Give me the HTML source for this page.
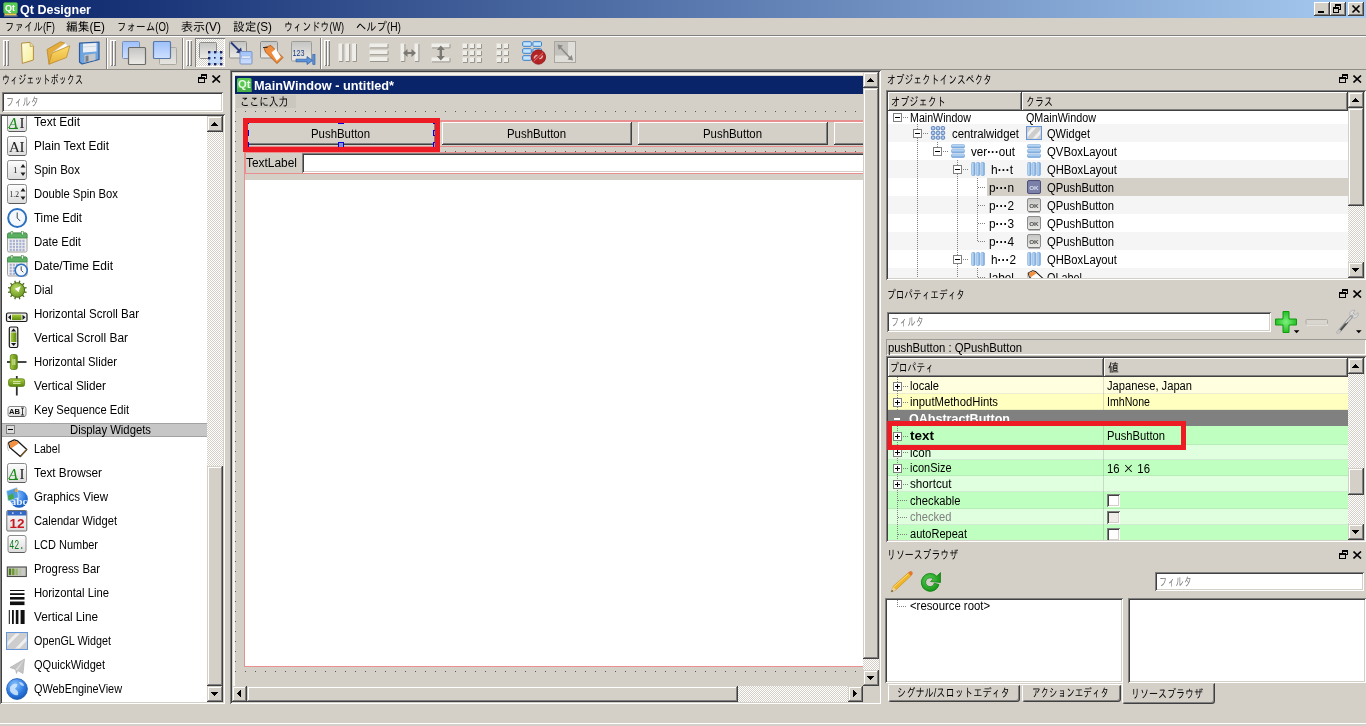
<!DOCTYPE html>
<html lang="ja"><head><meta charset="utf-8"><title>Qt Designer</title>
<style>

html,body{margin:0;padding:0;background:#d4d0c8;}
body{width:1366px;height:726px;overflow:hidden;font-family:"Liberation Sans","IPAGothic",sans-serif;font-size:12px;color:#000;}
#root{position:relative;width:1366px;height:726px;overflow:hidden;background:transparent;will-change:transform;}
#root div,#root span.t,#root svg{position:absolute;box-sizing:border-box;}
.t{white-space:nowrap;transform-origin:0 50%;display:block;}
.b{font-weight:bold;}
.w{color:#fff;}
.g{color:#808080;}
.face{background:#d4d0c8;}
.white{background:#fff;}
/* win classic 3d */
.btn{background:#d4d0c8;box-shadow:inset -1px -1px #404040,inset 1px 1px #fff,inset -2px -2px #808080,inset 2px 2px #d4d0c8;}
.sbtn{background:#d4d0c8;box-shadow:inset -1px -1px #404040,inset 1px 1px #d4d0c8,inset -2px -2px #808080,inset 2px 2px #fff;}
.sunk{box-shadow:inset 1px 1px #808080,inset -1px -1px #fff,inset 2px 2px #404040,inset -2px -2px #d4d0c8;}
.sunk1{box-shadow:inset 1px 1px #808080,inset -1px -1px #fff;}
.hdr{background:#d4d0c8;box-shadow:inset -1px -1px #404040,inset 1px 1px #fff,inset -2px -2px #808080;}
.track{background-color:#fff;background-image:conic-gradient(#d4d0c8 25%,#fff 0 50%,#d4d0c8 0 75%,#fff 0);background-size:2px 2px;}
.dots{background-image:radial-gradient(circle at .5px .5px,#000 .5px,transparent .6px);background-size:10px 10px;}
.clip{overflow:hidden;}

</style></head>
<body>
<div id="root">
<div class="" style="left:0px;top:0px;width:1366px;height:18px;background:linear-gradient(90deg,#0a246a 0%,#a6caf0 100%);"></div>
<svg style="left:3px;top:2px" width="16" height="15" viewBox="0 0 16 15" ><rect x="0.5" y="0.5" width="14" height="11" rx="1.5" fill="#5ccc58" stroke="#3c9c3c" stroke-width=".6"/><rect x="1.5" y="11.5" width="12" height="2" fill="#ecc84c"/><rect x="1" y="13.5" width="13.5" height="1" fill="#8c9c9c"/></svg>
<span id="t0" class="t b w" style="left:5px;top:1.5px;height:13px;line-height:13px;font-size:9px;transform:scaleX(1.0000);">Qt</span>
<span id="t1" class="t b w" style="left:20px;top:0.5px;height:17px;line-height:17px;font-size:13px;transform:scaleX(0.9635);">Qt Designer</span>
<div class="btn" style="left:1314px;top:2px;width:16px;height:14px;"></div>
<div class="btn" style="left:1330px;top:2px;width:16px;height:14px;"></div>
<div class="btn" style="left:1348px;top:2px;width:16px;height:14px;"></div>
<svg style="left:1314px;top:2px" width="16" height="14" viewBox="0 0 16 14" shape-rendering="crispEdges"><rect x="4" y="9" width="6" height="2" fill="#000"/></svg>
<svg style="left:1330px;top:2px" width="16" height="14" viewBox="0 0 16 14" shape-rendering="crispEdges"><path d="M5 2h6v6h-2v-1h1v-3h-4v1h-1z M3 5h6v6h-6z M4 7v3h4v-3z" fill="#000" fill-rule="evenodd"/></svg>
<svg style="left:1348px;top:2px" width="16" height="14" viewBox="0 0 16 14" ><path d="M4.5 3.5L11.5 10.5M11.5 3.5L4.5 10.5" stroke="#000" stroke-width="1.7"/></svg>
<span id="t2" class="t " style="left:5px;top:19px;height:16px;line-height:16px;font-size:12px;transform:scaleX(0.7895);">ファイル(F)</span>
<span id="t3" class="t " style="left:66px;top:19px;height:16px;line-height:16px;font-size:12px;transform:scaleX(0.9750);">編集(E)</span>
<span id="t4" class="t " style="left:117px;top:19px;height:16px;line-height:16px;font-size:12px;transform:scaleX(0.7960);">フォーム(O)</span>
<span id="t5" class="t " style="left:181px;top:19px;height:16px;line-height:16px;font-size:12px;transform:scaleX(1.0000);">表示(V)</span>
<span id="t6" class="t " style="left:233px;top:19px;height:16px;line-height:16px;font-size:12px;transform:scaleX(0.9750);">設定(S)</span>
<span id="t7" class="t " style="left:284px;top:19px;height:16px;line-height:16px;font-size:12px;transform:scaleX(0.7564);">ウィンドウ(W)</span>
<span id="t8" class="t " style="left:356px;top:19px;height:16px;line-height:16px;font-size:12px;transform:scaleX(0.8543);">ヘルプ(H)</span>
<div class="" style="left:0px;top:35px;width:1366px;height:1px;background:#808080"></div>
<div class="" style="left:0px;top:36px;width:1366px;height:1px;background:#fff"></div>
<div class="" style="left:0px;top:69px;width:1366px;height:1px;background:#8e8c86"></div>
<div class="" style="left:3px;top:40px;width:3px;height:26px;box-shadow:inset 1px 1px #fff,inset -1px -1px #808080;"></div><div class="" style="left:6px;top:40px;width:3px;height:26px;box-shadow:inset 1px 1px #fff,inset -1px -1px #808080;"></div>
<div class="" style="left:110px;top:40px;width:3px;height:26px;box-shadow:inset 1px 1px #fff,inset -1px -1px #808080;"></div><div class="" style="left:113px;top:40px;width:3px;height:26px;box-shadow:inset 1px 1px #fff,inset -1px -1px #808080;"></div>
<div class="" style="left:186px;top:40px;width:3px;height:26px;box-shadow:inset 1px 1px #fff,inset -1px -1px #808080;"></div><div class="" style="left:189px;top:40px;width:3px;height:26px;box-shadow:inset 1px 1px #fff,inset -1px -1px #808080;"></div>
<div class="" style="left:324px;top:40px;width:3px;height:26px;box-shadow:inset 1px 1px #fff,inset -1px -1px #808080;"></div><div class="" style="left:327px;top:40px;width:3px;height:26px;box-shadow:inset 1px 1px #fff,inset -1px -1px #808080;"></div>
<div class="" style="left:106px;top:38px;width:1px;height:31px;background:#808080"></div>
<div class="" style="left:107px;top:38px;width:1px;height:31px;background:#fff"></div>
<div class="" style="left:182px;top:38px;width:1px;height:31px;background:#808080"></div>
<div class="" style="left:183px;top:38px;width:1px;height:31px;background:#fff"></div>
<div class="" style="left:320px;top:38px;width:1px;height:31px;background:#808080"></div>
<div class="" style="left:321px;top:38px;width:1px;height:31px;background:#fff"></div>
<div class="track" style="left:195px;top:38px;width:30px;height:29px;box-shadow:inset 1px 1px #808080,inset -1px -1px #fff;"></div>
<svg width="0" height="0" style="left:0;top:0"><defs><linearGradient id="gBlue" x1="0" y1="0" x2="0" y2="1"><stop offset="0" stop-color="#9dc0fb"/><stop offset="1" stop-color="#cfe0fd"/></linearGradient><linearGradient id="gGray" x1="0" y1="0" x2="0" y2="1"><stop offset="0" stop-color="#c4c4c2"/><stop offset="1" stop-color="#ecebe8"/></linearGradient><linearGradient id="gGrayL" x1="0" y1="0" x2="0" y2="1"><stop offset="0" stop-color="#d2d0ca"/><stop offset="1" stop-color="#e6e4de"/></linearGradient><linearGradient id="gPaper" x1="0" y1="0" x2="1" y2="1"><stop offset="0" stop-color="#fffde0"/><stop offset="1" stop-color="#f6ee98"/></linearGradient><linearGradient id="gFold" x1="0" y1="0" x2="0" y2="1"><stop offset="0" stop-color="#ffdc6a"/><stop offset="1" stop-color="#e6b23c"/></linearGradient><linearGradient id="gBar" x1="0" y1="0" x2="0" y2="1"><stop offset="0" stop-color="#d8ecfc"/><stop offset="1" stop-color="#6fa4dc"/></linearGradient><linearGradient id="gBarH" x1="0" y1="0" x2="1" y2="0"><stop offset="0" stop-color="#d8ecfc"/><stop offset="1" stop-color="#6fa4dc"/></linearGradient><linearGradient id="gBox" x1="0" y1="0" x2="0" y2="1"><stop offset="0" stop-color="#fdfdfd"/><stop offset="1" stop-color="#dcdcdc"/></linearGradient><radialGradient id="gGlobe" cx=".4" cy=".3" r=".8"><stop offset="0" stop-color="#8cc4ff"/><stop offset=".6" stop-color="#2a78e0"/><stop offset="1" stop-color="#1450a8"/></radialGradient><radialGradient id="gDial" cx=".4" cy=".35" r=".7"><stop offset="0" stop-color="#b8d860"/><stop offset="1" stop-color="#6a9820"/></radialGradient><linearGradient id="gGreenV" x1="0" y1="0" x2="1" y2="0"><stop offset="0" stop-color="#a8cc3c"/><stop offset="1" stop-color="#5c8810"/></linearGradient><linearGradient id="gGreenH" x1="0" y1="0" x2="0" y2="1"><stop offset="0" stop-color="#a8cc3c"/><stop offset="1" stop-color="#5c8810"/></linearGradient><radialGradient id="gPlus" cx=".5" cy=".5" r=".6"><stop offset="0" stop-color="#7cf07c"/><stop offset="1" stop-color="#12b412"/></radialGradient><radialGradient id="gRef" cx=".4" cy=".4" r=".7"><stop offset="0" stop-color="#58d058"/><stop offset="1" stop-color="#0c8a0c"/></radialGradient></defs></svg>
<svg style="left:0;top:36px" width="600" height="34" viewBox="0 36 600 34"><path d="M21.5 43.2L30 42.3L33.4 46.2V60L22.3 63.4Z" fill="url(#gPaper)" stroke="#b48c3c" stroke-width="1"/><path d="M30 42.3L30.2 46.4L33.4 46.2" fill="#e8e0b0" stroke="#b48c3c" stroke-width=".7"/><path d="M47 49.5L60.5 41.8L65 43.2L64.5 57L49 64Z" fill="#e4ac3c" stroke="#b8882c" stroke-width=".8"/><path d="M51 53.5L65.5 43L67.5 45.5L54 60Z" fill="#fcfcfc" stroke="#c8c8c8" stroke-width=".5"/><path d="M48.8 64.3L52 53L69.8 45.8L66.5 57.5Z" fill="url(#gFold)" stroke="#bc8c2c" stroke-width=".8"/><path d="M79.5 43.2L99 42L99 59.5L82 64L79.5 62Z" fill="#6ea4e0" stroke="#2c5a9c" stroke-width="1.2" stroke-linejoin="round"/><path d="M83 43.8L96.5 43V51.5L83 52.5Z" fill="#ecf0f4"/><path d="M83 47L96.5 46.2" stroke="#c0c8d0" stroke-width=".6"/><path d="M84.5 55L95.5 53.5V60L84.5 62.6Z" fill="#c4c8cc"/><path d="M85.5 56L88.5 55.6V61.2L85.5 61.9Z" fill="#7c8084"/><rect x="122.5" y="41.5" width="17" height="17" rx="1" fill="url(#gBlue)" stroke="#7890b8" stroke-width="1"/><rect x="128.5" y="47.5" width="17" height="17" rx="1" fill="url(#gGray)" stroke="#6c6c68" stroke-width="1.2"/><rect x="159.5" y="47.5" width="17" height="17" rx="1" fill="url(#gGrayL)" stroke="#aaa89f" stroke-width="1"/><rect x="153.5" y="41.5" width="17" height="17" rx="1" fill="url(#gBlue)" stroke="#5878a8" stroke-width="1.2"/><rect x="199.5" y="42.5" width="17" height="16" rx="1" fill="url(#gGray)" stroke="#8c8c88" stroke-width="1"/><rect x="209" y="52" width="12" height="12" rx="1" fill="#c4dcfc" stroke="#9cb8e0" stroke-width="0.8"/><rect x="208" y="51" width="2.4" height="2.4" fill="#1c2464"/><rect x="208" y="57" width="2.4" height="2.4" fill="#1c2464"/><rect x="208" y="63" width="2.4" height="2.4" fill="#1c2464"/><rect x="214" y="51" width="2.4" height="2.4" fill="#1c2464"/><rect x="214" y="57" width="1.6" height="1.6" fill="#182060"/><rect x="214" y="63" width="2.4" height="2.4" fill="#1c2464"/><rect x="220" y="51" width="2.4" height="2.4" fill="#1c2464"/><rect x="220" y="57" width="2.4" height="2.4" fill="#1c2464"/><rect x="220" y="63" width="2.4" height="2.4" fill="#1c2464"/><rect x="229.5" y="41.5" width="17" height="16.5" rx="1" fill="url(#gGray)" stroke="#8c8c88" stroke-width="1"/><path d="M231 42.5L240 51.5" stroke="#28387c" stroke-width="1.8"/><path d="M242.5 54L236 52.5L241 47.5Z" fill="#28387c"/><rect x="240" y="51.5" width="12" height="12.5" rx="1" fill="url(#gBlue)" stroke="#7c94c0" stroke-width="1"/><rect x="241.5" y="56" width="9" height="2.2" fill="#e4eefc" stroke="#8ca4cc" stroke-width=".5"/><rect x="260.5" y="41.5" width="17" height="16.5" rx="1" fill="url(#gGray)" stroke="#8c8c88" stroke-width="1"/><path d="M264 47.5L271 45.5L283 57.5L277 63.5L265.5 52Z" fill="#f08c3c" stroke="#a85818" stroke-width=".9"/><path d="M271.5 52.5L275.8 48.8L280.8 57L276.8 60.8Z" fill="#fff"/><path d="M263 47.5h4.5" stroke="#303030" stroke-width="1"/><rect x="291.5" y="41.5" width="20" height="19.5" rx="1" fill="url(#gGray)" stroke="#9c9c98" stroke-width="1"/><text x="292.5" y="56" font-family="Liberation Sans,sans-serif" font-size="8.5" fill="#1c3c84" textLength="12" lengthAdjust="spacingAndGlyphs">123</text><path d="M296 59.2H307V56.5L312.5 60.5L307 64.5V61.8H296Z" fill="#5c94dc" stroke="#2c5ca4" stroke-width=".7"/><rect x="312.8" y="54.5" width="2.2" height="10" fill="#5c94dc" stroke="#2c5ca4" stroke-width=".6"/><rect x="338.5" y="43.5" width="4.4" height="18" fill="#f0eee8"/><path d="M342.9 44V61.5H339" fill="none" stroke="#98968e" stroke-width="1"/><rect x="345.3" y="43.5" width="4.4" height="18" fill="#f0eee8"/><path d="M349.7 44V61.5H345.8" fill="none" stroke="#98968e" stroke-width="1"/><rect x="352.1" y="43.5" width="4.4" height="18" fill="#f0eee8"/><path d="M356.5 44V61.5H352.6" fill="none" stroke="#98968e" stroke-width="1"/><rect x="369.5" y="43.5" width="18.5" height="4.4" fill="#f0eee8"/><path d="M388 44V47.9H370" fill="none" stroke="#98968e" stroke-width="1"/><rect x="369.5" y="50.3" width="18.5" height="4.4" fill="#f0eee8"/><path d="M388 50.8V54.7H370" fill="none" stroke="#98968e" stroke-width="1"/><rect x="369.5" y="57.1" width="18.5" height="4.4" fill="#f0eee8"/><path d="M388 57.6V61.5H370" fill="none" stroke="#98968e" stroke-width="1"/><rect x="400.5" y="43.5" width="4.4" height="18" fill="#f0eee8"/><path d="M404.9 44V61.5H401" fill="none" stroke="#98968e" stroke-width="1"/><rect x="414.5" y="43.5" width="4.4" height="18" fill="#f0eee8"/><path d="M418.9 44V61.5H415" fill="none" stroke="#98968e" stroke-width="1"/><path d="M403 53L407.5 49V52H411.5V49L416 53L411.5 57V54H407.5V57Z" fill="#7a7872"/><rect x="431.5" y="43.5" width="18.5" height="4.4" fill="#f0eee8"/><path d="M450 44V47.9H432" fill="none" stroke="#98968e" stroke-width="1"/><rect x="431.5" y="57.5" width="18.5" height="4.4" fill="#f0eee8"/><path d="M450 58V61.9H432" fill="none" stroke="#98968e" stroke-width="1"/><path d="M440.8 45.5L444.8 50H442V56H444.8L440.8 60.5L436.8 56H439.6V50H436.8Z" fill="#7a7872"/><rect x="462.5" y="43.5" width="5" height="5" fill="#f0eee8"/><path d="M467.5 44V48.5H463" fill="none" stroke="#98968e" stroke-width="1"/><rect x="462.5" y="50.5" width="5" height="5" fill="#f0eee8"/><path d="M467.5 51V55.5H463" fill="none" stroke="#98968e" stroke-width="1"/><rect x="462.5" y="57.5" width="5" height="5" fill="#f0eee8"/><path d="M467.5 58V62.5H463" fill="none" stroke="#98968e" stroke-width="1"/><rect x="469.5" y="43.5" width="5" height="5" fill="#f0eee8"/><path d="M474.5 44V48.5H470" fill="none" stroke="#98968e" stroke-width="1"/><rect x="469.5" y="50.5" width="5" height="5" fill="#f0eee8"/><path d="M474.5 51V55.5H470" fill="none" stroke="#98968e" stroke-width="1"/><rect x="469.5" y="57.5" width="5" height="5" fill="#f0eee8"/><path d="M474.5 58V62.5H470" fill="none" stroke="#98968e" stroke-width="1"/><rect x="476.5" y="43.5" width="5" height="5" fill="#f0eee8"/><path d="M481.5 44V48.5H477" fill="none" stroke="#98968e" stroke-width="1"/><rect x="476.5" y="50.5" width="5" height="5" fill="#f0eee8"/><path d="M481.5 51V55.5H477" fill="none" stroke="#98968e" stroke-width="1"/><rect x="476.5" y="57.5" width="5" height="5" fill="#f0eee8"/><path d="M481.5 58V62.5H477" fill="none" stroke="#98968e" stroke-width="1"/><rect x="496.5" y="43.5" width="5" height="5" fill="#f0eee8"/><path d="M501.5 44V48.5H497" fill="none" stroke="#98968e" stroke-width="1"/><rect x="496.5" y="50.5" width="5" height="5" fill="#f0eee8"/><path d="M501.5 51V55.5H497" fill="none" stroke="#98968e" stroke-width="1"/><rect x="496.5" y="57.5" width="5" height="5" fill="#f0eee8"/><path d="M501.5 58V62.5H497" fill="none" stroke="#98968e" stroke-width="1"/><rect x="503.5" y="43.5" width="5" height="5" fill="#f0eee8"/><path d="M508.5 44V48.5H504" fill="none" stroke="#98968e" stroke-width="1"/><rect x="503.5" y="50.5" width="5" height="5" fill="#f0eee8"/><path d="M508.5 51V55.5H504" fill="none" stroke="#98968e" stroke-width="1"/><rect x="503.5" y="57.5" width="5" height="5" fill="#f0eee8"/><path d="M508.5 58V62.5H504" fill="none" stroke="#98968e" stroke-width="1"/><rect x="522.7" y="41.7" width="8.6" height="4.6" rx="1" fill="#c4e4fc" stroke="#3880cc" stroke-width="1"/><rect x="522.7" y="48.7" width="8.6" height="4.6" rx="1" fill="#c4e4fc" stroke="#3880cc" stroke-width="1"/><rect x="522.7" y="55.7" width="8.6" height="4.6" rx="1" fill="#c4e4fc" stroke="#3880cc" stroke-width="1"/><rect x="532.9" y="41.7" width="8.6" height="4.6" rx="1" fill="#c4e4fc" stroke="#3880cc" stroke-width="1"/><rect x="532.9" y="48.7" width="8.6" height="4.6" rx="1" fill="#c4e4fc" stroke="#3880cc" stroke-width="1"/><rect x="532.9" y="55.7" width="8.6" height="4.6" rx="1" fill="#c4e4fc" stroke="#3880cc" stroke-width="1"/><circle cx="538.4" cy="57" r="7.2" fill="#b42424" stroke="#8c1414" stroke-width=".8"/><path d="M534.5 58.5a2.6 2.6 0 0 1 3 -3M542.3 55.5a2.6 2.6 0 0 1 -3 3" stroke="#e4b4b4" stroke-width="1.6" fill="none"/><path d="M533.8 61.2L543 52.8" stroke="#d87878" stroke-width="1"/><rect x="554.5" y="41.5" width="21" height="21" fill="#e0ded8" stroke="#a8a69e"/><rect x="555" y="42" width="13" height="13.5" fill="#c4c2bc"/><path d="M559 46L571 59" stroke="#8c8a84" stroke-width="1.5"/><path d="M557.5 44.5L563 45.5L558.8 50Z M573 60.5L567.5 59.5L571.8 55Z" fill="#8c8a84"/></svg>
<span id="t9" class="t " style="left:2px;top:72px;height:16px;line-height:16px;font-size:12px;transform:scaleX(0.6750);">ウィジェットボックス</span>
<svg style="left:198px;top:74px" width="9" height="9" viewBox="0 0 9 9" shape-rendering="crispEdges"><path d="M3 0h6v5h-2v-1h1v-2h-4v1h-1z M0 3h7v6h-7z M1 5v3h5v-3z" fill="#000" fill-rule="evenodd"/></svg>
<svg style="left:212px;top:75px" width="9" height="8" viewBox="0 0 9 8" ><path d="M0.5 0.5L8 7.5M8 0.5L0.5 7.5" stroke="#000" stroke-width="1.6" fill="none"/></svg>
<div class="white sunk" style="left:2px;top:92px;width:221px;height:20px;"></div>
<span id="t10" class="t g" style="left:6px;top:94px;height:16px;line-height:16px;font-size:12px;transform:scaleX(0.6875);">フィルタ</span>
<div class="white sunk" style="left:0px;top:114px;width:225px;height:590px;"></div>
<div class="clip" style="left:2px;top:116px;width:205px;height:586px;"><div style="left:-2px;top:-116px;width:225px;height:726px"><span id="t11" class="t " style="left:34px;top:114px;height:16px;line-height:16px;font-size:12px;transform:scaleX(0.9993);">Text Edit</span><span id="t12" class="t " style="left:34px;top:138px;height:16px;line-height:16px;font-size:12px;transform:scaleX(0.9891);">Plain Text Edit</span><span id="t13" class="t " style="left:34px;top:162px;height:16px;line-height:16px;font-size:12px;transform:scaleX(0.9577);">Spin Box</span><span id="t14" class="t " style="left:34px;top:186px;height:16px;line-height:16px;font-size:12px;transform:scaleX(0.9397);">Double Spin Box</span><span id="t15" class="t " style="left:34px;top:210px;height:16px;line-height:16px;font-size:12px;transform:scaleX(0.9555);">Time Edit</span><span id="t16" class="t " style="left:34px;top:234px;height:16px;line-height:16px;font-size:12px;transform:scaleX(0.9522);">Date Edit</span><span id="t17" class="t " style="left:34px;top:258px;height:16px;line-height:16px;font-size:12px;transform:scaleX(1.0010);">Date/Time Edit</span><span id="t18" class="t " style="left:34px;top:282px;height:16px;line-height:16px;font-size:12px;transform:scaleX(0.9191);">Dial</span><span id="t19" class="t " style="left:34px;top:306px;height:16px;line-height:16px;font-size:12px;transform:scaleX(0.9600);">Horizontal Scroll Bar</span><span id="t20" class="t " style="left:34px;top:330px;height:16px;line-height:16px;font-size:12px;transform:scaleX(0.9926);">Vertical Scroll Bar</span><span id="t21" class="t " style="left:34px;top:354px;height:16px;line-height:16px;font-size:12px;transform:scaleX(0.9427);">Horizontal Slider</span><span id="t22" class="t " style="left:34px;top:378px;height:16px;line-height:16px;font-size:12px;transform:scaleX(0.9813);">Vertical Slider</span><span id="t23" class="t " style="left:34px;top:402px;height:16px;line-height:16px;font-size:12px;transform:scaleX(0.9307);">Key Sequence Edit</span><div class="" style="left:2px;top:423px;width:205px;height:14px;background:#c6c6c6;border-top:1px solid #a2a2a2;border-bottom:1px solid #a2a2a2"></div><svg style="left:6px;top:425px" width="9" height="9" viewBox="0 0 9 9" shape-rendering="crispEdges"><rect x="0.5" y="0.5" width="8" height="8" fill="#dcdcdc" stroke="#808080"/><path d="M2 4.5h5" stroke="#000"/></svg><span id="t24" class="t " style="left:70px;top:422px;height:16px;line-height:16px;font-size:12px;transform:scaleX(0.9415);">Display Widgets</span><span id="t25" class="t " style="left:34px;top:441px;height:16px;line-height:16px;font-size:12px;transform:scaleX(0.8851);">Label</span><span id="t26" class="t " style="left:34px;top:465px;height:16px;line-height:16px;font-size:12px;transform:scaleX(0.9804);">Text Browser</span><span id="t27" class="t " style="left:34px;top:489px;height:16px;line-height:16px;font-size:12px;transform:scaleX(0.9591);">Graphics View</span><span id="t28" class="t " style="left:34px;top:513px;height:16px;line-height:16px;font-size:12px;transform:scaleX(0.9285);">Calendar Widget</span><span id="t29" class="t " style="left:34px;top:537px;height:16px;line-height:16px;font-size:12px;transform:scaleX(0.9139);">LCD Number</span><span id="t30" class="t " style="left:34px;top:561px;height:16px;line-height:16px;font-size:12px;transform:scaleX(0.9424);">Progress Bar</span><span id="t31" class="t " style="left:34px;top:585px;height:16px;line-height:16px;font-size:12px;transform:scaleX(0.9370);">Horizontal Line</span><span id="t32" class="t " style="left:34px;top:609px;height:16px;line-height:16px;font-size:12px;transform:scaleX(0.9790);">Vertical Line</span><span id="t33" class="t " style="left:34px;top:633px;height:16px;line-height:16px;font-size:12px;transform:scaleX(0.8994);">OpenGL Widget</span><span id="t34" class="t " style="left:34px;top:657px;height:16px;line-height:16px;font-size:12px;transform:scaleX(0.9178);">QQuickWidget</span><span id="t35" class="t " style="left:34px;top:681px;height:16px;line-height:16px;font-size:12px;transform:scaleX(0.9077);">QWebEngineView</span><svg style="left:0;top:100px" width="40" height="626" viewBox="0 100 40 626"><rect x="7.5" y="112.5" width="19" height="19" rx="2" fill="url(#gBox)" stroke="#8a8a8a"/><path d="M9 131.5H25" stroke="#5a5a5a" stroke-width="1"/><text x="8.5" y="127.5" font-family="Liberation Serif,serif" font-size="15" font-style="italic" fill="#188a18">A</text><path d="M9 128.5h9" stroke="#188a18" stroke-width="1"/><text x="19.5" y="127.5" font-family="Liberation Serif,serif" font-size="15" fill="#202020">I</text><rect x="7.5" y="136.5" width="19" height="19" rx="2" fill="url(#gBox)" stroke="#8a8a8a"/><path d="M9 155.5H25" stroke="#5a5a5a" stroke-width="1"/><text x="9" y="151.5" font-family="Liberation Serif,serif" font-size="15"  fill="#202020">A</text><text x="19.5" y="151.5" font-family="Liberation Serif,serif" font-size="15" fill="#202020">I</text><rect x="7.5" y="160.5" width="19" height="19" rx="2" fill="url(#gBox)" stroke="#8a8a8a"/><path d="M9 179.5H25" stroke="#5a5a5a" stroke-width="1"/><text x="13" y="173" font-family="Liberation Serif,serif" font-size="9" fill="#202020">1</text><path d="M20.5 167.5l2.5 -3.5l2.5 3.5z M20.5 172.5l2.5 3.5l2.5 -3.5z" fill="#202020"/><rect x="7.5" y="184.5" width="19" height="19" rx="2" fill="url(#gBox)" stroke="#8a8a8a"/><path d="M9 203.5H25" stroke="#5a5a5a" stroke-width="1"/><text x="9.5" y="197" font-family="Liberation Serif,serif" font-size="7.5" fill="#202020">1.2</text><path d="M20.5 191.5l2.5 -3.5l2.5 3.5z M20.5 196.5l2.5 3.5l2.5 -3.5z" fill="#202020"/><circle cx="17.2" cy="218" r="9" fill="#f4f8fc" stroke="#2c70c0" stroke-width="2"/><path d="M17.2 212.5V218L20.2 221" stroke="#404850" stroke-width="1" fill="none"/><rect x="7.5" y="233" width="19.5" height="19" rx="1.5" fill="#f0f0f0" stroke="#a0a0a0"/><path d="M7.5 238v-3.5a1.5 1.5 0 0 1 1.5 -1.5h16.5a1.5 1.5 0 0 1 1.5 1.5v3.5z" fill="#58b060" stroke="#3c8c44" stroke-width=".8"/><rect x="11" y="231.5" width="1.8" height="3.4" fill="#e8f4e8" stroke="#3c8c44" stroke-width=".5"/><rect x="21.5" y="231.5" width="1.8" height="3.4" fill="#e8f4e8" stroke="#3c8c44" stroke-width=".5"/><rect x="9.6" y="239.7" width="2.2" height="2.2" fill="#a8b0d0"/><rect x="9.6" y="242.7" width="2.2" height="2.2" fill="#a8b0d0"/><rect x="9.6" y="245.7" width="2.2" height="2.2" fill="#a8b0d0"/><rect x="9.6" y="248.7" width="2.2" height="2.2" fill="#a8b0d0"/><rect x="12.8" y="239.7" width="2.2" height="2.2" fill="#a8b0d0"/><rect x="12.8" y="242.7" width="2.2" height="2.2" fill="#a8b0d0"/><rect x="12.8" y="245.7" width="2.2" height="2.2" fill="#a8b0d0"/><rect x="12.8" y="248.7" width="2.2" height="2.2" fill="#a8b0d0"/><rect x="16" y="239.7" width="2.2" height="2.2" fill="#a8b0d0"/><rect x="16" y="242.7" width="2.2" height="2.2" fill="#a8b0d0"/><rect x="16" y="245.7" width="2.2" height="2.2" fill="#a8b0d0"/><rect x="16" y="248.7" width="2.2" height="2.2" fill="#a8b0d0"/><rect x="19.2" y="239.7" width="2.2" height="2.2" fill="#a8b0d0"/><rect x="19.2" y="242.7" width="2.2" height="2.2" fill="#a8b0d0"/><rect x="19.2" y="245.7" width="2.2" height="2.2" fill="#a8b0d0"/><rect x="19.2" y="248.7" width="2.2" height="2.2" fill="#a8b0d0"/><rect x="22.4" y="239.7" width="2.2" height="2.2" fill="#a8b0d0"/><rect x="22.4" y="242.7" width="2.2" height="2.2" fill="#a8b0d0"/><rect x="22.4" y="245.7" width="2.2" height="2.2" fill="#a8b0d0"/><rect x="22.4" y="248.7" width="2.2" height="2.2" fill="#a8b0d0"/><rect x="7.5" y="257" width="19.5" height="19" rx="1.5" fill="#f0f0f0" stroke="#a0a0a0"/><path d="M7.5 262v-3.5a1.5 1.5 0 0 1 1.5 -1.5h16.5a1.5 1.5 0 0 1 1.5 1.5v3.5z" fill="#58b060" stroke="#3c8c44" stroke-width=".8"/><rect x="11" y="255.5" width="1.8" height="3.4" fill="#e8f4e8" stroke="#3c8c44" stroke-width=".5"/><rect x="21.5" y="255.5" width="1.8" height="3.4" fill="#e8f4e8" stroke="#3c8c44" stroke-width=".5"/><rect x="9.6" y="263.7" width="2.2" height="2.2" fill="#a8b0d0"/><rect x="9.6" y="266.7" width="2.2" height="2.2" fill="#a8b0d0"/><rect x="9.6" y="269.7" width="2.2" height="2.2" fill="#a8b0d0"/><rect x="9.6" y="272.7" width="2.2" height="2.2" fill="#a8b0d0"/><rect x="12.8" y="263.7" width="2.2" height="2.2" fill="#a8b0d0"/><rect x="12.8" y="266.7" width="2.2" height="2.2" fill="#a8b0d0"/><rect x="12.8" y="269.7" width="2.2" height="2.2" fill="#a8b0d0"/><rect x="12.8" y="272.7" width="2.2" height="2.2" fill="#a8b0d0"/><rect x="16" y="263.7" width="2.2" height="2.2" fill="#a8b0d0"/><rect x="16" y="266.7" width="2.2" height="2.2" fill="#a8b0d0"/><rect x="16" y="269.7" width="2.2" height="2.2" fill="#a8b0d0"/><rect x="16" y="272.7" width="2.2" height="2.2" fill="#a8b0d0"/><rect x="19.2" y="263.7" width="2.2" height="2.2" fill="#a8b0d0"/><rect x="19.2" y="266.7" width="2.2" height="2.2" fill="#a8b0d0"/><rect x="19.2" y="269.7" width="2.2" height="2.2" fill="#a8b0d0"/><rect x="19.2" y="272.7" width="2.2" height="2.2" fill="#a8b0d0"/><rect x="22.4" y="263.7" width="2.2" height="2.2" fill="#a8b0d0"/><rect x="22.4" y="266.7" width="2.2" height="2.2" fill="#a8b0d0"/><rect x="22.4" y="269.7" width="2.2" height="2.2" fill="#a8b0d0"/><rect x="22.4" y="272.7" width="2.2" height="2.2" fill="#a8b0d0"/><circle cx="21.2" cy="270.2" r="6" fill="#f4f8fc" stroke="#2c70c0" stroke-width="1.6"/><path d="M21.2 266.35V270.2L23.3 272.3" stroke="#404850" stroke-width="1" fill="none"/><path d="M24.0615 291.812L26.5729 292.485" stroke="#4c6818" stroke-width="1.3"/><path d="M22.2497 294.95L24.0882 296.788" stroke="#4c6818" stroke-width="1.3"/><path d="M19.1117 296.761L19.7847 299.273" stroke="#4c6818" stroke-width="1.3"/><path d="M15.4883 296.761L14.8153 299.273" stroke="#4c6818" stroke-width="1.3"/><path d="M12.3503 294.95L10.5118 296.788" stroke="#4c6818" stroke-width="1.3"/><path d="M10.5385 291.812L8.02711 292.485" stroke="#4c6818" stroke-width="1.3"/><path d="M10.5385 288.188L8.02711 287.515" stroke="#4c6818" stroke-width="1.3"/><path d="M12.3503 285.05L10.5118 283.212" stroke="#4c6818" stroke-width="1.3"/><path d="M15.4883 283.239L14.8153 280.727" stroke="#4c6818" stroke-width="1.3"/><path d="M19.1117 283.239L19.7847 280.727" stroke="#4c6818" stroke-width="1.3"/><path d="M22.2497 285.05L24.0882 283.212" stroke="#4c6818" stroke-width="1.3"/><path d="M24.0615 288.188L26.5729 287.515" stroke="#4c6818" stroke-width="1.3"/><circle cx="17.3" cy="290" r="7.3" fill="url(#gDial)" stroke="#4c6c18" stroke-width="1"/><path d="M20.8 286L14.8 288.8L18.5 292.2Z" fill="#fff"/><rect x="6.5" y="313" width="20.5" height="8.5" rx="1.5" fill="#f0f0f0" stroke="#181818" stroke-width="1.2"/><rect x="12" y="314.5" width="9.5" height="5.6" fill="url(#gGreenH)"/><path d="M8 317.3l3 -2.6v5.2z M25.5 317.3l-3 -2.6v5.2z" fill="#181818"/><rect x="9.3" y="327" width="8.5" height="20.5" rx="1.5" fill="#f0f0f0" stroke="#181818" stroke-width="1.2"/><rect x="10.8" y="332.5" width="5.6" height="9.5" fill="url(#gGreenV)"/><path d="M13.6 328.5l-2.6 3h5.2z M13.6 346l-2.6 -3h5.2z" fill="#181818"/><path d="M7 362H26.5" stroke="#303030" stroke-width="1.8"/><rect x="10.3" y="354.5" width="7" height="15" rx="2" fill="url(#gGreenV)" stroke="#587c18" stroke-width=".8"/><path d="M13 359v6M14.8 359v6" stroke="#e4f0c0" stroke-width=".9"/><path d="M16.8 376V395.5" stroke="#303030" stroke-width="1.8"/><rect x="8.6" y="378.8" width="16" height="7.6" rx="2" fill="url(#gGreenH)" stroke="#587c18" stroke-width=".8"/><path d="M13 381.6h7.5M13 383.4h7.5" stroke="#e4f0c0" stroke-width=".9"/><rect x="8" y="406.5" width="18" height="10" rx="2" fill="url(#gBox)" stroke="#8a8a8a"/><path d="M9.5 416.5H24.5" stroke="#5a5a5a" stroke-width="1"/><text x="9" y="414.3" font-family="Liberation Sans,sans-serif" font-weight="bold" font-size="7.5" fill="#101010" textLength="11" lengthAdjust="spacingAndGlyphs">AB</text><path d="M22.5 408v7M21 408h3M21 415h3" stroke="#101010" stroke-width=".8"/><g transform="translate(6.3 439) scale(1)"><path d="M2.2 3.6L8 0.8L11 1.8L20.5 10.5L14 17.5L3.5 8.5Z" fill="#fff" stroke="#181818" stroke-width="1.3" stroke-linejoin="round"/><path d="M2.8 3.9L8 1.5L10.6 2.4L12.5 4.2L5.2 9.2L4 8.2Z" fill="#f09040"/><path d="M14 17.5L20.5 10.5" stroke="#806030" stroke-width="1.2"/><path d="M3 2.5C0.5 4 0.5 8 2.5 12" stroke="#909090" stroke-width=".6" fill="none"/></g><rect x="7.5" y="463.5" width="19" height="19" rx="2" fill="url(#gBox)" stroke="#8a8a8a"/><path d="M9 482.5H25" stroke="#5a5a5a" stroke-width="1"/><text x="8.5" y="478.5" font-family="Liberation Serif,serif" font-size="15" font-style="italic" fill="#188a18">A</text><path d="M9 479.5h9" stroke="#188a18" stroke-width="1"/><text x="19.5" y="478.5" font-family="Liberation Serif,serif" font-size="15" fill="#202020">I</text><circle cx="19" cy="499" r="8.8" fill="url(#gGlobe)"/><path d="M6.5 491L17 487.5L18.5 497.5L8 501Z" fill="#4c9ce0" stroke="#d8e4f0" stroke-width=".6"/><path d="M8 496L13 493L14 498.5L9 500.5Z" fill="#48a848"/><rect x="15" y="489" width="2.5" height="3" fill="#f0a030"/><text x="10.5" y="504.5" font-family="Liberation Serif,serif" font-weight="bold" font-size="10" fill="#e8f0ff" textLength="17" lengthAdjust="spacingAndGlyphs">abc</text><rect x="6.8" y="510.5" width="20" height="20.5" rx="1" fill="url(#gBox)" stroke="#707070"/><rect x="7.3" y="511" width="19" height="4.5" fill="#3468c4"/><rect x="12" y="512.4" width="1.6" height="1.4" fill="#d8e4fc"/><rect x="20" y="512.4" width="1.6" height="1.4" fill="#d8e4fc"/><text x="9.5" y="527.5" font-family="Liberation Sans,sans-serif" font-weight="bold" font-size="12.5" fill="#c81820" textLength="15" lengthAdjust="spacingAndGlyphs">12</text><rect x="8" y="535.5" width="18" height="17" rx="2" fill="url(#gBox)" stroke="#8a8a8a"/><path d="M9.5 552.5H24.5" stroke="#5a5a5a" stroke-width="1"/><text x="9.2" y="548.5" font-family="Liberation Mono,monospace" font-size="12" fill="#10781c" textLength="15" lengthAdjust="spacingAndGlyphs">42.</text><rect x="7.3" y="567" width="19" height="9.5" fill="#c8c8c4" stroke="#484848" stroke-width="1.1"/><rect x="8.8" y="568.5" width="2.4" height="6.6" fill="#4c7c18"/><rect x="12.1" y="568.5" width="2.4" height="6.6" fill="#6c9830"/><rect x="15.4" y="568.5" width="2.4" height="6.6" fill="#98b470"/><rect x="18.7" y="568.5" width="2.4" height="6.6" fill="#b8c4a4"/><rect x="10" y="590" width="14.5" height="1" fill="#101010"/><rect x="10" y="593.2" width="14.5" height="1.8" fill="#101010"/><rect x="10" y="597" width="14.5" height="2.6" fill="#101010"/><rect x="10" y="601.5" width="14.5" height="3.6" fill="#101010"/><rect x="8.8" y="610" width="1" height="14" fill="#101010"/><rect x="12" y="610" width="1.8" height="14" fill="#101010"/><rect x="15.8" y="610" width="2.6" height="14" fill="#101010"/><rect x="20.6" y="610" width="4" height="14" fill="#101010"/><rect x="6.5" y="632.5" width="21" height="17" fill="#cdcdcd" stroke="#6496dc" stroke-width="1"/><clipPath id="cp6_632"><rect x="7.5" y="633.5" width="19" height="15"/></clipPath><g clip-path="url(#cp6_632)"><path d="M6 645.5L19.2 632M15.9 650L28 637.4" stroke="#f0f0f0" stroke-width="3"/></g><path d="M10 667.5L24.5 659L23 673.5L17.5 670.5L16.5 673.5L15.5 669.5Z" fill="#c4c4c4" stroke="#a8a8a8" stroke-width=".6"/><path d="M15.5 669.5L24.5 659L17.5 670.5" fill="#dcdcdc"/><circle cx="17" cy="689" r="10.4" fill="url(#gGlobe)" stroke="#1c58b4" stroke-width=".8"/><path d="M10 687c2 -3 5 -4 7 -3c1 2 -1 3 -2 5c2 1 4 3 3 6c-3 1 -6 -1 -8 -4z" fill="#d4e8ff" opacity=".85"/><path d="M19 682c3 0 5 2 5 4c-2 0 -4 -1 -5 -4z" fill="#d4e8ff" opacity=".8"/></svg></div></div>
<div class="track" style="left:207px;top:116px;width:16px;height:586px;"></div>
<div class="sbtn" style="left:207px;top:116px;width:16px;height:16px;"></div>
<svg style="left:211px;top:122px" width="7" height="4" viewBox="0 0 7 4" shape-rendering="crispEdges"><g fill="#000"><rect x="3" y="0" width="1" height="1"/><rect x="2" y="1" width="3" height="1"/><rect x="1" y="2" width="5" height="1"/><rect x="0" y="3" width="7" height="1"/></g></svg>
<div class="sbtn" style="left:207px;top:686px;width:16px;height:16px;"></div>
<svg style="left:211px;top:692px" width="7" height="4" viewBox="0 0 7 4" shape-rendering="crispEdges"><g fill="#000"><rect x="0" y="0" width="7" height="1"/><rect x="1" y="1" width="5" height="1"/><rect x="2" y="2" width="3" height="1"/><rect x="3" y="3" width="1" height="1"/></g></svg>
<div class="sbtn" style="left:207px;top:466px;width:16px;height:220px;"></div>
<div class="sunk" style="left:230px;top:70px;width:651px;height:634px;background:#d4d0c8"></div>
<div class="" style="left:233px;top:73px;width:630px;height:2px;background:#f6f5f2"></div>
<div class="" style="left:233px;top:73px;width:2px;height:613px;background:#f6f5f2"></div>
<div class="clip" style="left:235px;top:76px;width:628px;height:610px;"><div style="left:-235px;top:-76px;width:1366px;height:726px"><div class="" style="left:235px;top:76px;width:628px;height:18px;background:#0a246a"></div><svg style="left:237px;top:77.5px" width="14.5" height="14.5" viewBox="0 0 14.5 14.5" ><rect width="14.5" height="14.5" rx="1.5" fill="#58c850"/><rect y="10" width="14.5" height="4.5" rx="1.5" fill="#48b044"/></svg><span id="t36" class="t b" style="left:238px;top:77px;height:15px;line-height:15px;font-size:11px;transform:scaleX(1.0217);color:#e6f8e6">Qt</span><span id="t37" class="t b w" style="left:254px;top:77.5px;height:16px;line-height:16px;font-size:12px;transform:scaleX(1.0616);">MainWindow - untitled*</span><div class="" style="left:236px;top:95px;width:60px;height:13px;background:#cac7bf"></div><span id="t38" class="t " style="left:240px;top:94px;height:16px;line-height:16px;font-size:12px;transform:scaleX(0.8000);">ここに入力</span><svg style="left:235px;top:111px" width="628" height="565" shape-rendering="crispEdges"><defs><pattern id="gd" width="10" height="10" patternUnits="userSpaceOnUse"><rect width="1" height="1" fill="#5a5a5a"/></pattern></defs><rect width="628" height="565" fill="url(#gd)"/></svg><div class="" style="left:244px;top:120px;width:800px;height:547px;border:1px solid #ea8f8f"></div><div class="white" style="left:245px;top:180px;width:800px;height:486px;"></div><div class="" style="left:245px;top:121px;width:790px;height:26px;border:1px solid #ea8f8f;background:#d4d0c8"></div><div class="btn" style="left:246px;top:122px;width:190px;height:23px;"></div><span id="t39" class="t " style="left:311px;top:125.5px;height:16px;line-height:16px;font-size:12px;transform:scaleX(0.9509);">PushButton</span><div class="btn" style="left:442px;top:122px;width:190px;height:23px;"></div><span id="t40" class="t " style="left:507px;top:125.5px;height:16px;line-height:16px;font-size:12px;transform:scaleX(0.9509);">PushButton</span><div class="btn" style="left:638px;top:122px;width:190px;height:23px;"></div><span id="t41" class="t " style="left:703px;top:125.5px;height:16px;line-height:16px;font-size:12px;transform:scaleX(0.9509);">PushButton</span><div class="btn" style="left:834px;top:122px;width:190px;height:23px;"></div><span id="t42" class="t " style="left:899px;top:125.5px;height:16px;line-height:16px;font-size:12px;transform:scaleX(0.9509);">PushButton</span><div class="" style="left:245px;top:152px;width:790px;height:22px;border:1px solid #ea8f8f;background:#d4d0c8"></div><span id="t43" class="t " style="left:246px;top:155px;height:16px;line-height:16px;font-size:12px;transform:scaleX(0.9927);">TextLabel</span><div class="white sunk" style="left:302px;top:153px;width:740px;height:20px;"></div><div class="" style="left:243px;top:118px;width:6px;height:6px;background:#8a94c8;border:1px solid #0000e0"></div><div class="" style="left:338px;top:118px;width:6px;height:6px;background:#8a94c8;border:1px solid #0000e0"></div><div class="" style="left:433px;top:118px;width:6px;height:6px;background:#8a94c8;border:1px solid #0000e0"></div><div class="" style="left:243px;top:130px;width:6px;height:6px;background:#8a94c8;border:1px solid #0000e0"></div><div class="" style="left:433px;top:130px;width:6px;height:6px;background:#8a94c8;border:1px solid #0000e0"></div><div class="" style="left:243px;top:142px;width:6px;height:6px;background:#8a94c8;border:1px solid #0000e0"></div><div class="" style="left:338px;top:142px;width:6px;height:6px;background:#8a94c8;border:1px solid #0000e0"></div><div class="" style="left:433px;top:142px;width:6px;height:6px;background:#8a94c8;border:1px solid #0000e0"></div><div class="" style="left:243px;top:118px;width:197px;height:34px;border:5px solid #ed1c24"></div></div></div>
<div class="track" style="left:863px;top:72px;width:16px;height:614px;"></div>
<div class="sbtn" style="left:863px;top:72px;width:16px;height:16px;"></div>
<svg style="left:867px;top:78px" width="7" height="4" viewBox="0 0 7 4" shape-rendering="crispEdges"><g fill="#000"><rect x="3" y="0" width="1" height="1"/><rect x="2" y="1" width="3" height="1"/><rect x="1" y="2" width="5" height="1"/><rect x="0" y="3" width="7" height="1"/></g></svg>
<div class="sbtn" style="left:863px;top:670px;width:16px;height:16px;"></div>
<svg style="left:867px;top:676px" width="7" height="4" viewBox="0 0 7 4" shape-rendering="crispEdges"><g fill="#000"><rect x="0" y="0" width="7" height="1"/><rect x="1" y="1" width="5" height="1"/><rect x="2" y="2" width="3" height="1"/><rect x="3" y="3" width="1" height="1"/></g></svg>
<div class="sbtn" style="left:863px;top:88px;width:16px;height:571px;"></div>
<div class="track" style="left:232px;top:686px;width:631px;height:16px;"></div>
<div class="sbtn" style="left:232px;top:686px;width:15px;height:16px;"></div>
<svg style="left:237px;top:690px" width="4" height="7" viewBox="0 0 4 7" shape-rendering="crispEdges"><g fill="#000"><rect x="0" y="3" width="1" height="1"/><rect x="1" y="2" width="1" height="3"/><rect x="2" y="1" width="1" height="5"/><rect x="3" y="0" width="1" height="7"/></g></svg>
<div class="sbtn" style="left:848px;top:686px;width:15px;height:16px;"></div>
<svg style="left:853px;top:690px" width="4" height="7" viewBox="0 0 4 7" shape-rendering="crispEdges"><g fill="#000"><rect x="0" y="0" width="1" height="7"/><rect x="1" y="1" width="1" height="5"/><rect x="2" y="2" width="1" height="3"/><rect x="3" y="3" width="1" height="1"/></g></svg>
<div class="sbtn" style="left:247px;top:686px;width:491px;height:16px;"></div>
<div class="face" style="left:863px;top:686px;width:16px;height:16px;"></div>
<span id="t44" class="t " style="left:887px;top:72px;height:16px;line-height:16px;font-size:12px;transform:scaleX(0.7292);">オブジェクトインスペクタ</span>
<svg style="left:1339px;top:74px" width="9" height="9" viewBox="0 0 9 9" shape-rendering="crispEdges"><path d="M3 0h6v5h-2v-1h1v-2h-4v1h-1z M0 3h7v6h-7z M1 5v3h5v-3z" fill="#000" fill-rule="evenodd"/></svg>
<svg style="left:1353px;top:75px" width="9" height="8" viewBox="0 0 9 8" ><path d="M0.5 0.5L8 7.5M8 0.5L0.5 7.5" stroke="#000" stroke-width="1.6" fill="none"/></svg>
<div class="white sunk" style="left:886px;top:90px;width:480px;height:190px;"></div>
<div class="clip" style="left:888px;top:111px;width:460px;height:167px;"><div style="left:-888px;top:-111px;width:1366px;height:726px"><div class="" style="left:888px;top:124px;width:460px;height:18px;background:#f5f5f5"></div><div class="" style="left:888px;top:160px;width:460px;height:18px;background:#f5f5f5"></div><div class="" style="left:888px;top:196px;width:460px;height:18px;background:#f5f5f5"></div><div class="" style="left:888px;top:232px;width:460px;height:18px;background:#f5f5f5"></div><div class="" style="left:888px;top:268px;width:460px;height:18px;background:#f5f5f5"></div><div class="" style="left:987px;top:178px;width:361px;height:18px;background:#d4d0c8"></div><div class="" style="left:917px;top:124px;width:1px;height:160px;background:repeating-linear-gradient(180deg,#808080 0 1px,transparent 1px 2px)"></div><div class="" style="left:937px;top:142px;width:1px;height:5px;background:repeating-linear-gradient(180deg,#808080 0 1px,transparent 1px 2px)"></div><div class="" style="left:957px;top:160px;width:1px;height:120px;background:repeating-linear-gradient(180deg,#808080 0 1px,transparent 1px 2px)"></div><div class="" style="left:977px;top:178px;width:1px;height:64px;background:repeating-linear-gradient(180deg,#808080 0 1px,transparent 1px 2px)"></div><div class="" style="left:977px;top:268px;width:1px;height:10px;background:repeating-linear-gradient(180deg,#808080 0 1px,transparent 1px 2px)"></div><div class="" style="left:903px;top:117px;width:5px;height:1px;background:repeating-linear-gradient(90deg,#808080 0 1px,transparent 1px 2px)"></div><div class="" style="left:923px;top:133px;width:5px;height:1px;background:repeating-linear-gradient(90deg,#808080 0 1px,transparent 1px 2px)"></div><div class="" style="left:943px;top:151px;width:5px;height:1px;background:repeating-linear-gradient(90deg,#808080 0 1px,transparent 1px 2px)"></div><div class="" style="left:963px;top:169px;width:5px;height:1px;background:repeating-linear-gradient(90deg,#808080 0 1px,transparent 1px 2px)"></div><div class="" style="left:963px;top:259px;width:5px;height:1px;background:repeating-linear-gradient(90deg,#808080 0 1px,transparent 1px 2px)"></div><div class="" style="left:978px;top:187px;width:8px;height:1px;background:repeating-linear-gradient(90deg,#808080 0 1px,transparent 1px 2px)"></div><div class="" style="left:978px;top:205px;width:8px;height:1px;background:repeating-linear-gradient(90deg,#808080 0 1px,transparent 1px 2px)"></div><div class="" style="left:978px;top:223px;width:8px;height:1px;background:repeating-linear-gradient(90deg,#808080 0 1px,transparent 1px 2px)"></div><div class="" style="left:978px;top:241px;width:8px;height:1px;background:repeating-linear-gradient(90deg,#808080 0 1px,transparent 1px 2px)"></div><div class="" style="left:978px;top:277px;width:8px;height:1px;background:repeating-linear-gradient(90deg,#808080 0 1px,transparent 1px 2px)"></div><svg style="left:893px;top:113px" width="9" height="9" viewBox="0 0 9 9" shape-rendering="crispEdges"><rect x="0.5" y="0.5" width="8" height="8" fill="#fff" stroke="#808080"/><path d="M2 4.5h5" stroke="#000"/></svg><svg style="left:913px;top:129px" width="9" height="9" viewBox="0 0 9 9" shape-rendering="crispEdges"><rect x="0.5" y="0.5" width="8" height="8" fill="#fff" stroke="#808080"/><path d="M2 4.5h5" stroke="#000"/></svg><svg style="left:933px;top:147px" width="9" height="9" viewBox="0 0 9 9" shape-rendering="crispEdges"><rect x="0.5" y="0.5" width="8" height="8" fill="#fff" stroke="#808080"/><path d="M2 4.5h5" stroke="#000"/></svg><svg style="left:953px;top:165px" width="9" height="9" viewBox="0 0 9 9" shape-rendering="crispEdges"><rect x="0.5" y="0.5" width="8" height="8" fill="#fff" stroke="#808080"/><path d="M2 4.5h5" stroke="#000"/></svg><svg style="left:953px;top:255px" width="9" height="9" viewBox="0 0 9 9" shape-rendering="crispEdges"><rect x="0.5" y="0.5" width="8" height="8" fill="#fff" stroke="#808080"/><path d="M2 4.5h5" stroke="#000"/></svg><span id="t45" class="t " style="left:910px;top:109.5px;height:16px;line-height:16px;font-size:12px;transform:scaleX(0.8879);">MainWindow</span><span id="t46" class="t " style="left:952px;top:125.5px;height:16px;line-height:16px;font-size:12px;transform:scaleX(0.9474);">centralwidget</span><span id="t47" class="t " style="left:971px;top:143.5px;height:16px;line-height:16px;font-size:12px;transform:scaleX(0.9700);">ver<b>···</b>out</span><span id="t48" class="t " style="left:991px;top:161.5px;height:16px;line-height:16px;font-size:12px;transform:scaleX(0.9986);">h<b>···</b>t</span><span id="t49" class="t " style="left:989px;top:179.5px;height:16px;line-height:16px;font-size:12px;transform:scaleX(0.9852);">p<b>···</b>n</span><span id="t50" class="t " style="left:989px;top:197.5px;height:16px;line-height:16px;font-size:12px;transform:scaleX(0.9852);">p<b>···</b>2</span><span id="t51" class="t " style="left:989px;top:215.5px;height:16px;line-height:16px;font-size:12px;transform:scaleX(0.9852);">p<b>···</b>3</span><span id="t52" class="t " style="left:989px;top:233.5px;height:16px;line-height:16px;font-size:12px;transform:scaleX(0.9852);">p<b>···</b>4</span><span id="t53" class="t " style="left:991px;top:251.5px;height:16px;line-height:16px;font-size:12px;transform:scaleX(0.9852);">h<b>···</b>2</span><span id="t54" class="t " style="left:989px;top:269.5px;height:16px;line-height:16px;font-size:12px;transform:scaleX(0.9858);">label</span><span id="t55" class="t " style="left:1026px;top:109.5px;height:16px;line-height:16px;font-size:12px;transform:scaleX(0.8971);">QMainWindow</span><span id="t56" class="t " style="left:1047px;top:125.5px;height:16px;line-height:16px;font-size:12px;transform:scaleX(0.9210);">QWidget</span><span id="t57" class="t " style="left:1047px;top:143.5px;height:16px;line-height:16px;font-size:12px;transform:scaleX(0.9453);">QVBoxLayout</span><span id="t58" class="t " style="left:1047px;top:161.5px;height:16px;line-height:16px;font-size:12px;transform:scaleX(0.9368);">QHBoxLayout</span><span id="t59" class="t " style="left:1047px;top:179.5px;height:16px;line-height:16px;font-size:12px;transform:scaleX(0.9385);">QPushButton</span><span id="t60" class="t " style="left:1047px;top:197.5px;height:16px;line-height:16px;font-size:12px;transform:scaleX(0.9385);">QPushButton</span><span id="t61" class="t " style="left:1047px;top:215.5px;height:16px;line-height:16px;font-size:12px;transform:scaleX(0.9385);">QPushButton</span><span id="t62" class="t " style="left:1047px;top:233.5px;height:16px;line-height:16px;font-size:12px;transform:scaleX(0.9385);">QPushButton</span><span id="t63" class="t " style="left:1047px;top:251.5px;height:16px;line-height:16px;font-size:12px;transform:scaleX(0.9368);">QHBoxLayout</span><span id="t64" class="t " style="left:1047px;top:269.5px;height:16px;line-height:16px;font-size:12px;transform:scaleX(0.9043);">QLabel</span><svg style="left:930px;top:125px" width="16" height="16" viewBox="0 0 16 16" ><rect x="1.4" y="1.6" width="3.4" height="3.2" rx=".8" fill="#b4d0f0" stroke="#5478b4" stroke-width=".9"/><rect x="1.4" y="6.3" width="3.4" height="3.2" rx=".8" fill="#b4d0f0" stroke="#5478b4" stroke-width=".9"/><rect x="1.4" y="11" width="3.4" height="3.2" rx=".8" fill="#b4d0f0" stroke="#5478b4" stroke-width=".9"/><rect x="6.3" y="1.6" width="3.4" height="3.2" rx=".8" fill="#b4d0f0" stroke="#5478b4" stroke-width=".9"/><rect x="6.3" y="6.3" width="3.4" height="3.2" rx=".8" fill="#b4d0f0" stroke="#5478b4" stroke-width=".9"/><rect x="6.3" y="11" width="3.4" height="3.2" rx=".8" fill="#b4d0f0" stroke="#5478b4" stroke-width=".9"/><rect x="11.2" y="1.6" width="3.4" height="3.2" rx=".8" fill="#b4d0f0" stroke="#5478b4" stroke-width=".9"/><rect x="11.2" y="6.3" width="3.4" height="3.2" rx=".8" fill="#b4d0f0" stroke="#5478b4" stroke-width=".9"/><rect x="11.2" y="11" width="3.4" height="3.2" rx=".8" fill="#b4d0f0" stroke="#5478b4" stroke-width=".9"/></svg><svg style="left:1026px;top:125px" width="17" height="16" viewBox="0 0 17 16" ><rect x="0.5" y="1.5" width="15" height="13" fill="#cdcdcd" stroke="#6496dc" stroke-width="1"/><clipPath id="cp0_1"><rect x="1.5" y="2.5" width="13" height="11"/></clipPath><g clip-path="url(#cp0_1)"><path d="M0 11.5L9.6 1M7.2 15L16 5.2" stroke="#f0f0f0" stroke-width="3"/></g></svg><svg style="left:950px;top:143px" width="16" height="16" viewBox="0 0 16 16" ><rect x="1.5" y="1.6" width="13" height="3.4" rx="1" fill="url(#gBar)" stroke="#6c9cd4" stroke-width=".6"/><rect x="1.5" y="6.3" width="13" height="3.4" rx="1" fill="url(#gBar)" stroke="#6c9cd4" stroke-width=".6"/><rect x="1.5" y="11" width="13" height="3.4" rx="1" fill="url(#gBar)" stroke="#6c9cd4" stroke-width=".6"/></svg><svg style="left:1026px;top:143px" width="16" height="16" viewBox="0 0 16 16" ><rect x="1.5" y="1.6" width="13" height="3.4" rx="1" fill="url(#gBar)" stroke="#6c9cd4" stroke-width=".6"/><rect x="1.5" y="6.3" width="13" height="3.4" rx="1" fill="url(#gBar)" stroke="#6c9cd4" stroke-width=".6"/><rect x="1.5" y="11" width="13" height="3.4" rx="1" fill="url(#gBar)" stroke="#6c9cd4" stroke-width=".6"/></svg><svg style="left:970px;top:161px" width="16" height="16" viewBox="0 0 16 16" ><rect x="1.6" y="1.5" width="3.4" height="13" rx="1" fill="url(#gBarH)" stroke="#6c9cd4" stroke-width=".6"/><rect x="6.3" y="1.5" width="3.4" height="13" rx="1" fill="url(#gBarH)" stroke="#6c9cd4" stroke-width=".6"/><rect x="11" y="1.5" width="3.4" height="13" rx="1" fill="url(#gBarH)" stroke="#6c9cd4" stroke-width=".6"/></svg><svg style="left:1026px;top:161px" width="16" height="16" viewBox="0 0 16 16" ><rect x="1.6" y="1.5" width="3.4" height="13" rx="1" fill="url(#gBarH)" stroke="#6c9cd4" stroke-width=".6"/><rect x="6.3" y="1.5" width="3.4" height="13" rx="1" fill="url(#gBarH)" stroke="#6c9cd4" stroke-width=".6"/><rect x="11" y="1.5" width="3.4" height="13" rx="1" fill="url(#gBarH)" stroke="#6c9cd4" stroke-width=".6"/></svg><svg style="left:1026px;top:179px" width="16" height="16" viewBox="0 0 16 16" ><rect x="1.5" y="1.5" width="13" height="13" rx="1.5" fill="#7a80a8" stroke="#4c5078" stroke-width="1"/><text x="3.2" y="10.5" font-family="Liberation Sans,sans-serif" font-size="6" font-weight="bold" fill="#d8dcf0" textLength="9.5" lengthAdjust="spacingAndGlyphs">OK</text></svg><svg style="left:1026px;top:197px" width="16" height="16" viewBox="0 0 16 16" ><rect x="1.5" y="1.5" width="13" height="13" rx="1.5" fill="url(#gGray)" stroke="#8c8c8c" stroke-width="1"/><path d="M2.5 15h11.5" stroke="#606060" stroke-width=".8"/><text x="3.2" y="10.5" font-family="Liberation Sans,sans-serif" font-size="6" font-weight="bold" fill="#505050" textLength="9.5" lengthAdjust="spacingAndGlyphs">OK</text></svg><svg style="left:1026px;top:215px" width="16" height="16" viewBox="0 0 16 16" ><rect x="1.5" y="1.5" width="13" height="13" rx="1.5" fill="url(#gGray)" stroke="#8c8c8c" stroke-width="1"/><path d="M2.5 15h11.5" stroke="#606060" stroke-width=".8"/><text x="3.2" y="10.5" font-family="Liberation Sans,sans-serif" font-size="6" font-weight="bold" fill="#505050" textLength="9.5" lengthAdjust="spacingAndGlyphs">OK</text></svg><svg style="left:1026px;top:233px" width="16" height="16" viewBox="0 0 16 16" ><rect x="1.5" y="1.5" width="13" height="13" rx="1.5" fill="url(#gGray)" stroke="#8c8c8c" stroke-width="1"/><path d="M2.5 15h11.5" stroke="#606060" stroke-width=".8"/><text x="3.2" y="10.5" font-family="Liberation Sans,sans-serif" font-size="6" font-weight="bold" fill="#505050" textLength="9.5" lengthAdjust="spacingAndGlyphs">OK</text></svg><svg style="left:970px;top:251px" width="16" height="16" viewBox="0 0 16 16" ><rect x="1.6" y="1.5" width="3.4" height="13" rx="1" fill="url(#gBarH)" stroke="#6c9cd4" stroke-width=".6"/><rect x="6.3" y="1.5" width="3.4" height="13" rx="1" fill="url(#gBarH)" stroke="#6c9cd4" stroke-width=".6"/><rect x="11" y="1.5" width="3.4" height="13" rx="1" fill="url(#gBarH)" stroke="#6c9cd4" stroke-width=".6"/></svg><svg style="left:1026px;top:251px" width="16" height="16" viewBox="0 0 16 16" ><rect x="1.6" y="1.5" width="3.4" height="13" rx="1" fill="url(#gBarH)" stroke="#6c9cd4" stroke-width=".6"/><rect x="6.3" y="1.5" width="3.4" height="13" rx="1" fill="url(#gBarH)" stroke="#6c9cd4" stroke-width=".6"/><rect x="11" y="1.5" width="3.4" height="13" rx="1" fill="url(#gBarH)" stroke="#6c9cd4" stroke-width=".6"/></svg><svg style="left:1026px;top:269px" width="18" height="16" viewBox="0 0 18 16" ><g transform="translate(0.5 1) scale(0.8)"><path d="M2.2 3.6L8 0.8L11 1.8L20.5 10.5L14 17.5L3.5 8.5Z" fill="#fff" stroke="#181818" stroke-width="1.3" stroke-linejoin="round"/><path d="M2.8 3.9L8 1.5L10.6 2.4L12.5 4.2L5.2 9.2L4 8.2Z" fill="#f09040"/><path d="M14 17.5L20.5 10.5" stroke="#806030" stroke-width="1.2"/><path d="M3 2.5C0.5 4 0.5 8 2.5 12" stroke="#909090" stroke-width=".6" fill="none"/></g></svg></div></div>
<div class="hdr" style="left:888px;top:92px;width:134px;height:19px;"></div>
<div class="hdr" style="left:1022px;top:92px;width:326px;height:19px;"></div>
<span id="t65" class="t " style="left:891px;top:94px;height:16px;line-height:16px;font-size:12px;transform:scaleX(0.7639);">オブジェクト</span>
<span id="t66" class="t " style="left:1026px;top:94px;height:16px;line-height:16px;font-size:12px;transform:scaleX(0.7500);">クラス</span>
<div class="track" style="left:1348px;top:92px;width:16px;height:186px;"></div>
<div class="sbtn" style="left:1348px;top:92px;width:16px;height:16px;"></div>
<svg style="left:1352px;top:98px" width="7" height="4" viewBox="0 0 7 4" shape-rendering="crispEdges"><g fill="#000"><rect x="3" y="0" width="1" height="1"/><rect x="2" y="1" width="3" height="1"/><rect x="1" y="2" width="5" height="1"/><rect x="0" y="3" width="7" height="1"/></g></svg>
<div class="sbtn" style="left:1348px;top:262px;width:16px;height:16px;"></div>
<svg style="left:1352px;top:268px" width="7" height="4" viewBox="0 0 7 4" shape-rendering="crispEdges"><g fill="#000"><rect x="0" y="0" width="7" height="1"/><rect x="1" y="1" width="5" height="1"/><rect x="2" y="2" width="3" height="1"/><rect x="3" y="3" width="1" height="1"/></g></svg>
<div class="sbtn" style="left:1348px;top:108px;width:16px;height:98px;"></div>
<span id="t67" class="t " style="left:887px;top:287px;height:16px;line-height:16px;font-size:12px;transform:scaleX(0.7222);">プロパティエディタ</span>
<svg style="left:1339px;top:289px" width="9" height="9" viewBox="0 0 9 9" shape-rendering="crispEdges"><path d="M3 0h6v5h-2v-1h1v-2h-4v1h-1z M0 3h7v6h-7z M1 5v3h5v-3z" fill="#000" fill-rule="evenodd"/></svg>
<svg style="left:1353px;top:290px" width="9" height="8" viewBox="0 0 9 8" ><path d="M0.5 0.5L8 7.5M8 0.5L0.5 7.5" stroke="#000" stroke-width="1.6" fill="none"/></svg>
<div class="white sunk" style="left:887px;top:312px;width:384px;height:20px;"></div>
<span id="t68" class="t g" style="left:891px;top:314px;height:16px;line-height:16px;font-size:12px;transform:scaleX(0.6875);">フィルタ</span>
<svg style="left:1274px;top:309px" width="27" height="26" viewBox="0 0 27 26" ><path d="M9 2.5h6v7.5h7.5v6h-7.5v7.5h-6v-7.5h-7.5v-6h7.5z" fill="url(#gPlus)" stroke="#0c9c0c" stroke-width="1" stroke-linejoin="round"/><path d="M19.8 21.2h5.6l-2.8 3z" fill="#000"/></svg>
<svg style="left:1305px;top:317.5px" width="24" height="8" viewBox="0 0 24 8" ><rect x="1" y="1.5" width="21.5" height="5" rx="1" fill="#d8d5ce" stroke="#aeaaa2" stroke-width="1"/><path d="M1.5 7h21.5" stroke="#f4f2ee" stroke-width="1"/></svg>
<svg style="left:1335px;top:308px" width="28" height="27" viewBox="0 0 28 27" ><path d="M3 24.5L17 8" stroke="#9a9a9a" stroke-width="3.2" stroke-linecap="round"/><path d="M4.4 23.6L12 14.6" stroke="#4c4c4c" stroke-width="1.8" stroke-linecap="round"/><path d="M3 24.6L4.6 22.8" stroke="#c8c8c8" stroke-width="2.6" stroke-linecap="round"/><path d="M11 14.8L16.5 8.6" stroke="#dcdcdc" stroke-width="1.2" stroke-linecap="round"/><path d="M15 7.5c-1 -3 1.5 -6 5 -5.2l-2 2.8l2.4 2l2.6 -2.4c1 3.5 -2 6 -5 5.2z" fill="#dcdcdc" stroke="#a4a4a4" stroke-width=".7"/><circle cx="17" cy="8" r="1" fill="#fff" stroke="#606060" stroke-width=".6"/><path d="M21 22.2h5.6l-2.8 3z" fill="#000"/></svg>
<div class="" style="left:886px;top:339px;width:480px;height:16px;box-shadow:inset 1px 1px #9c9a94,inset -1px -1px #fff"></div>
<span id="t69" class="t " style="left:888px;top:339.5px;height:16px;line-height:16px;font-size:12px;transform:scaleX(0.9429);">pushButton : QPushButton</span>
<div class="white sunk" style="left:886px;top:356px;width:480px;height:186px;"></div>
<div class="clip" style="left:888px;top:377px;width:460px;height:163px;"><div style="left:-888px;top:-377px;width:1366px;height:726px"><div class="" style="left:888px;top:377px;width:460px;height:17px;background:#ffffdf"></div><div class="" style="left:888px;top:394px;width:460px;height:16px;background:#ffffbf"></div><div class="" style="left:888px;top:410px;width:460px;height:16px;background:#808080"></div><div class="" style="left:888px;top:426px;width:460px;height:19px;background:#bfffbf"></div><div class="" style="left:888px;top:445px;width:460px;height:15px;background:#dfffdf"></div><div class="" style="left:888px;top:460px;width:460px;height:16px;background:#bfffbf"></div><div class="" style="left:888px;top:476px;width:460px;height:16px;background:#dfffdf"></div><div class="" style="left:888px;top:492px;width:460px;height:17px;background:#bfffbf"></div><div class="" style="left:888px;top:509px;width:460px;height:16px;background:#dfffdf"></div><div class="" style="left:888px;top:525px;width:460px;height:17px;background:#bfffbf"></div><div class="" style="left:897px;top:377px;width:1px;height:33px;background:repeating-linear-gradient(180deg,#808080 0 1px,transparent 1px 2px)"></div><div class="" style="left:897px;top:426px;width:1px;height:115px;background:repeating-linear-gradient(180deg,#808080 0 1px,transparent 1px 2px)"></div><div class="" style="left:1103px;top:377px;width:1px;height:17px;background:rgba(128,128,128,.28)"></div><div class="" style="left:888px;top:393px;width:460px;height:1px;background:rgba(128,128,128,.14)"></div><svg style="left:893px;top:382px" width="9" height="9" viewBox="0 0 9 9" shape-rendering="crispEdges"><rect x="0.5" y="0.5" width="8" height="8" fill="#fff" stroke="#808080"/><path d="M2 4.5h5" stroke="#000"/><path d="M4.5 2v5" stroke="#000"/></svg><div class="" style="left:903px;top:386px;width:5px;height:1px;background:repeating-linear-gradient(90deg,#808080 0 1px,transparent 1px 2px)"></div><span id="t70" class="t " style="left:910px;top:377.5px;height:16px;line-height:16px;font-size:12px;transform:scaleX(0.9248);">locale</span><span id="t71" class="t " style="left:1107px;top:377.5px;height:16px;line-height:16px;font-size:12px;transform:scaleX(0.9299);">Japanese, Japan</span><div class="" style="left:1103px;top:394px;width:1px;height:16px;background:rgba(128,128,128,.28)"></div><div class="" style="left:888px;top:409px;width:460px;height:1px;background:rgba(128,128,128,.14)"></div><svg style="left:893px;top:398px" width="9" height="9" viewBox="0 0 9 9" shape-rendering="crispEdges"><rect x="0.5" y="0.5" width="8" height="8" fill="#fff" stroke="#808080"/><path d="M2 4.5h5" stroke="#000"/><path d="M4.5 2v5" stroke="#000"/></svg><div class="" style="left:903px;top:402px;width:5px;height:1px;background:repeating-linear-gradient(90deg,#808080 0 1px,transparent 1px 2px)"></div><span id="t72" class="t " style="left:910px;top:394px;height:16px;line-height:16px;font-size:12px;transform:scaleX(0.9423);">inputMethodHints</span><span id="t73" class="t " style="left:1107px;top:394px;height:16px;line-height:16px;font-size:12px;transform:scaleX(0.8829);">ImhNone</span><div class="" style="left:894px;top:418px;width:6px;height:2px;background:#fff"></div><span id="t74" class="t b w" style="left:909px;top:411px;height:16px;line-height:16px;font-size:12px;transform:scaleX(1.0448);">QAbstractButton</span><div class="" style="left:1103px;top:426px;width:1px;height:19px;background:rgba(128,128,128,.28)"></div><div class="" style="left:888px;top:444px;width:460px;height:1px;background:rgba(128,128,128,.14)"></div><svg style="left:893px;top:432px" width="9" height="9" viewBox="0 0 9 9" shape-rendering="crispEdges"><rect x="0.5" y="0.5" width="8" height="8" fill="#fff" stroke="#808080"/><path d="M2 4.5h5" stroke="#000"/><path d="M4.5 2v5" stroke="#000"/></svg><div class="" style="left:903px;top:436px;width:5px;height:1px;background:repeating-linear-gradient(90deg,#808080 0 1px,transparent 1px 2px)"></div><span id="t75" class="t b" style="left:910px;top:427.5px;height:16px;line-height:16px;font-size:12px;transform:scaleX(1.1244);">text</span><span id="t76" class="t " style="left:1107px;top:427.5px;height:16px;line-height:16px;font-size:12px;transform:scaleX(0.9348);">PushButton</span><div class="" style="left:1103px;top:445px;width:1px;height:15px;background:rgba(128,128,128,.28)"></div><div class="" style="left:888px;top:459px;width:460px;height:1px;background:rgba(128,128,128,.14)"></div><svg style="left:893px;top:448px" width="9" height="9" viewBox="0 0 9 9" shape-rendering="crispEdges"><rect x="0.5" y="0.5" width="8" height="8" fill="#fff" stroke="#808080"/><path d="M2 4.5h5" stroke="#000"/><path d="M4.5 2v5" stroke="#000"/></svg><div class="" style="left:903px;top:452px;width:5px;height:1px;background:repeating-linear-gradient(90deg,#808080 0 1px,transparent 1px 2px)"></div><span id="t77" class="t " style="left:910px;top:444.5px;height:16px;line-height:16px;font-size:12px;transform:scaleX(0.9539);">icon</span><div class="" style="left:1103px;top:460px;width:1px;height:16px;background:rgba(128,128,128,.28)"></div><div class="" style="left:888px;top:475px;width:460px;height:1px;background:rgba(128,128,128,.14)"></div><svg style="left:893px;top:464px" width="9" height="9" viewBox="0 0 9 9" shape-rendering="crispEdges"><rect x="0.5" y="0.5" width="8" height="8" fill="#fff" stroke="#808080"/><path d="M2 4.5h5" stroke="#000"/><path d="M4.5 2v5" stroke="#000"/></svg><div class="" style="left:903px;top:468px;width:5px;height:1px;background:repeating-linear-gradient(90deg,#808080 0 1px,transparent 1px 2px)"></div><span id="t78" class="t " style="left:910px;top:460px;height:16px;line-height:16px;font-size:12px;transform:scaleX(0.9149);">iconSize</span><span id="t79" class="t " style="left:1107px;top:460px;height:16px;line-height:16px;font-size:12px;transform:scaleX(0.9477);">16 <span style="font-family:IPAGothic,sans-serif">×</span> 16</span><div class="" style="left:1103px;top:476px;width:1px;height:16px;background:rgba(128,128,128,.28)"></div><div class="" style="left:888px;top:491px;width:460px;height:1px;background:rgba(128,128,128,.14)"></div><svg style="left:893px;top:480px" width="9" height="9" viewBox="0 0 9 9" shape-rendering="crispEdges"><rect x="0.5" y="0.5" width="8" height="8" fill="#fff" stroke="#808080"/><path d="M2 4.5h5" stroke="#000"/><path d="M4.5 2v5" stroke="#000"/></svg><div class="" style="left:903px;top:484px;width:5px;height:1px;background:repeating-linear-gradient(90deg,#808080 0 1px,transparent 1px 2px)"></div><span id="t80" class="t " style="left:910px;top:476px;height:16px;line-height:16px;font-size:12px;transform:scaleX(0.9722);">shortcut</span><div class="" style="left:1103px;top:492px;width:1px;height:17px;background:rgba(128,128,128,.28)"></div><div class="" style="left:888px;top:508px;width:460px;height:1px;background:rgba(128,128,128,.14)"></div><div class="" style="left:898px;top:500px;width:10px;height:1px;background:repeating-linear-gradient(90deg,#808080 0 1px,transparent 1px 2px)"></div><span id="t81" class="t " style="left:910px;top:492.5px;height:16px;line-height:16px;font-size:12px;transform:scaleX(0.9344);">checkable</span><div class="sunk" style="left:1107px;top:494px;width:13px;height:13px;background:#fff"></div><div class="" style="left:1103px;top:509px;width:1px;height:16px;background:rgba(128,128,128,.28)"></div><div class="" style="left:888px;top:524px;width:460px;height:1px;background:rgba(128,128,128,.14)"></div><div class="" style="left:898px;top:517px;width:10px;height:1px;background:repeating-linear-gradient(90deg,#808080 0 1px,transparent 1px 2px)"></div><span id="t82" class="t  g" style="left:910px;top:509px;height:16px;line-height:16px;font-size:12px;transform:scaleX(0.9283);">checked</span><div class="sunk" style="left:1107px;top:511px;width:13px;height:13px;background:#f0ece8"></div><div class="" style="left:1103px;top:525px;width:1px;height:17px;background:rgba(128,128,128,.28)"></div><div class="" style="left:888px;top:541px;width:460px;height:1px;background:rgba(128,128,128,.14)"></div><div class="" style="left:898px;top:534px;width:10px;height:1px;background:repeating-linear-gradient(90deg,#808080 0 1px,transparent 1px 2px)"></div><span id="t83" class="t " style="left:910px;top:525.5px;height:16px;line-height:16px;font-size:12px;transform:scaleX(0.9184);">autoRepeat</span><div class="sunk" style="left:1107px;top:528px;width:13px;height:13px;background:#fff"></div></div></div>
<div class="hdr" style="left:888px;top:358px;width:216px;height:19px;"></div>
<div class="hdr" style="left:1104px;top:358px;width:244px;height:19px;"></div>
<span id="t84" class="t " style="left:890px;top:359.5px;height:16px;line-height:16px;font-size:12px;transform:scaleX(0.7333);">プロパティ</span>
<span id="t85" class="t " style="left:1108px;top:359.5px;height:16px;line-height:16px;font-size:12px;transform:scaleX(0.9167);">値</span>
<div class="track" style="left:1348px;top:358px;width:16px;height:182px;"></div>
<div class="sbtn" style="left:1348px;top:358px;width:16px;height:16px;"></div>
<svg style="left:1352px;top:364px" width="7" height="4" viewBox="0 0 7 4" shape-rendering="crispEdges"><g fill="#000"><rect x="3" y="0" width="1" height="1"/><rect x="2" y="1" width="3" height="1"/><rect x="1" y="2" width="5" height="1"/><rect x="0" y="3" width="7" height="1"/></g></svg>
<div class="sbtn" style="left:1348px;top:524px;width:16px;height:16px;"></div>
<svg style="left:1352px;top:530px" width="7" height="4" viewBox="0 0 7 4" shape-rendering="crispEdges"><g fill="#000"><rect x="0" y="0" width="7" height="1"/><rect x="1" y="1" width="5" height="1"/><rect x="2" y="2" width="3" height="1"/><rect x="3" y="3" width="1" height="1"/></g></svg>
<div class="sbtn" style="left:1348px;top:468px;width:16px;height:27px;"></div>
<div class="" style="left:887px;top:421px;width:299px;height:29px;border:5px solid #ed1c24"></div>
<span id="t86" class="t " style="left:887px;top:547px;height:16px;line-height:16px;font-size:12px;transform:scaleX(0.7396);">リソースブラウザ</span>
<svg style="left:1339px;top:550px" width="9" height="9" viewBox="0 0 9 9" shape-rendering="crispEdges"><path d="M3 0h6v5h-2v-1h1v-2h-4v1h-1z M0 3h7v6h-7z M1 5v3h5v-3z" fill="#000" fill-rule="evenodd"/></svg>
<svg style="left:1353px;top:551px" width="9" height="8" viewBox="0 0 9 8" ><path d="M0.5 0.5L8 7.5M8 0.5L0.5 7.5" stroke="#000" stroke-width="1.6" fill="none"/></svg>
<svg style="left:889px;top:570px" width="24" height="24" viewBox="0 0 24 24" ><path d="M2.2 22L4 16.5L19.5 2.6L22.3 5.4L7 19.8Z" fill="#f0b428" stroke="#c88c18" stroke-width=".6"/><path d="M4.8 17L20.2 3.2" stroke="#fcdc70" stroke-width="1"/><path d="M19 3L20.5 1.6a2 2 0 0 1 2.8 2.8L22 5.8Z" fill="#e07830"/><path d="M2.2 22L4 16.5L7 19.8Z" fill="#e8d4a0"/><path d="M2.2 22L2.9 19.8L4.2 21.2Z" fill="#404040"/></svg>
<svg style="left:919px;top:570.3px" width="23" height="23" viewBox="0 0 23 23" ><path d="M17.8 6.2A9 9 0 1 0 20 14.5L15.3 13.2A4.4 4.4 0 1 1 14.2 9.2L11.5 11.5L21.5 12.5L21.5 2.5Z" fill="url(#gRef)" stroke="#0c7c0c" stroke-width=".7" stroke-linejoin="round"/></svg>
<div class="white sunk" style="left:1155px;top:572px;width:209px;height:19px;"></div>
<span id="t87" class="t g" style="left:1159px;top:573.5px;height:16px;line-height:16px;font-size:12px;transform:scaleX(0.6875);">フィルタ</span>
<div class="white sunk" style="left:885px;top:598px;width:238px;height:85px;"></div>
<div class="" style="left:897px;top:600px;width:1px;height:6px;background:repeating-linear-gradient(180deg,#808080 0 1px,transparent 1px 2px)"></div>
<div class="" style="left:897px;top:606px;width:10px;height:1px;background:repeating-linear-gradient(90deg,#808080 0 1px,transparent 1px 2px)"></div>
<span id="t88" class="t " style="left:910px;top:598px;height:16px;line-height:16px;font-size:12px;transform:scaleX(0.9443);">&lt;resource root&gt;</span>
<div class="white sunk" style="left:1128px;top:598px;width:238px;height:85px;"></div>
<div class="" style="left:888px;top:684px;width:234px;height:1px;background:#fff"></div>
<div class="" style="left:888px;top:685px;width:132px;height:17px;background:#d4d0c8;border:1px solid;border-color:transparent #404040 #404040 #fff;border-radius:0 0 3px 3px;box-shadow:inset -1px -1px #808080"></div>
<div class="" style="left:1022px;top:685px;width:99px;height:17px;background:#d4d0c8;border:1px solid;border-color:transparent #404040 #404040 #fff;border-radius:0 0 3px 3px;box-shadow:inset -1px -1px #808080"></div>
<div class="" style="left:1122px;top:683px;width:93px;height:21px;background:#d4d0c8;border:1px solid;border-color:transparent #404040 #404040 #fff;border-radius:0 0 3px 3px;box-shadow:inset -1px -1px #808080"></div>
<span id="t89" class="t " style="left:897px;top:685px;height:16px;line-height:16px;font-size:12px;transform:scaleX(0.7669);">シグナル/スロットエディタ</span>
<span id="t90" class="t " style="left:1032px;top:685px;height:16px;line-height:16px;font-size:12px;transform:scaleX(0.7130);">アクションエディタ</span>
<span id="t91" class="t " style="left:1131px;top:686px;height:16px;line-height:16px;font-size:12px;transform:scaleX(0.7500);">リソースブラウザ</span>
<div class="" style="left:0px;top:723px;width:1366px;height:1px;background:#fff"></div>
</div>
</body></html>
